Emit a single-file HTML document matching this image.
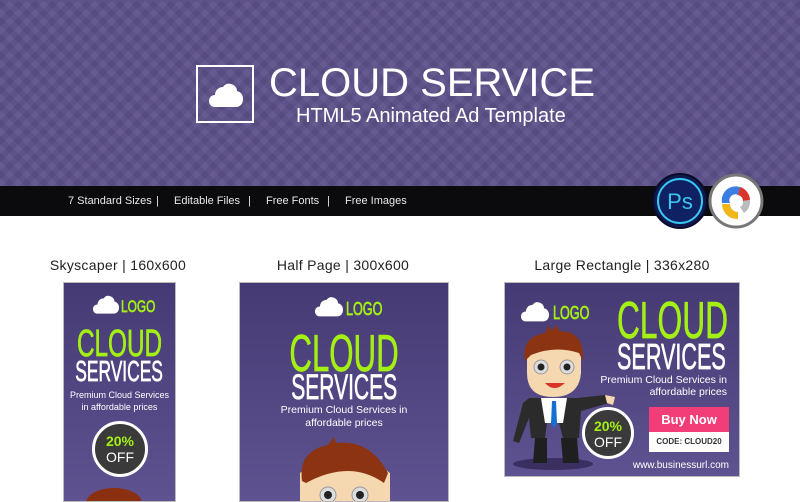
<!DOCTYPE html>
<html><head><meta charset="utf-8"><style>
*{margin:0;padding:0;box-sizing:border-box}
body{width:800px;height:500px;overflow:hidden;background:#fff;font-family:"Liberation Sans",sans-serif;position:relative}
.abs{position:absolute}
.hdr{left:0;top:0;width:800px;height:186px;background:#5c5088;background-image:repeating-linear-gradient(45deg,rgba(255,255,255,.03) 0 6px,rgba(0,0,0,.03) 6px 12px),repeating-linear-gradient(-45deg,rgba(255,255,255,.03) 0 6px,rgba(0,0,0,.03) 6px 12px)}
.bar{left:0;top:186px;width:800px;height:30px;background:#0b0a0c;color:#e8e8e8;font-size:11px;line-height:30px}
.lbl{top:257px;font-size:14px;color:#222;text-align:center;letter-spacing:.3px}
.ad{background:linear-gradient(#463a74,#5e5390);border:1px solid #bbb;overflow:hidden}
.c{position:absolute;left:0;width:100%;display:flex;justify-content:center;white-space:nowrap}
.c2{position:absolute;left:0;width:100%;text-align:center}
.cond{display:inline-block;transform:scaleX(.62);transform-origin:center;white-space:nowrap;-webkit-text-stroke:0.7px currentColor}
.g{color:#a4f013}.w{color:#fff}
.badge{position:absolute;border-radius:50%;background:#3a3a3a;border:3px solid #fff;text-align:center;color:#fff;font-weight:bold}
</style></head><body>
<svg width="0" height="0" style="position:absolute"><defs><symbol id="cl" viewBox="0 0 34 24"><path d="M6 24C2 24 0 21 0 18C0 14 3 12 6 12C6 7 10 4 14 4C16 1 19 0 22 1C26 2 28 5 28 8C32 9 34 12 34 16C34 21 31 24 27 24Z" fill="#fff"/></symbol></defs></svg>

<div class="abs hdr"></div>
<div class="abs" style="left:196px;top:65px;width:58px;height:58px;border:2px solid #fff"></div>
<svg class="abs" style="left:209px;top:83px" width="34" height="24"><use href="#cl"/></svg>
<div class="abs" style="left:269px;top:60px;font-size:40px;line-height:46px;color:#fff;white-space:nowrap">CLOUD SERVICE</div>
<div class="abs" style="left:296px;top:105px;font-size:20px;line-height:23px;color:#fff;white-space:nowrap">HTML5 Animated Ad Template</div>

<div class="abs bar"><span style="position:absolute;left:68px">7 Standard Sizes</span><span style="position:absolute;left:156px">|</span><span style="position:absolute;left:174px">Editable Files</span><span style="position:absolute;left:248px">|</span><span style="position:absolute;left:266px">Free Fonts</span><span style="position:absolute;left:327px">|</span><span style="position:absolute;left:345px">Free Images</span></div>

<svg class="abs" style="left:650px;top:172px" width="116" height="58">
<circle cx="30" cy="29" r="27" fill="#0e1a4e" stroke="#0a0a2a" stroke-width="2"/>
<circle cx="30" cy="29" r="22" fill="#0f2162" stroke="#39c7f0" stroke-width="2"/>
<text x="30" y="37" text-anchor="middle" font-family="Liberation Sans" font-size="22" fill="#39c7f0">Ps</text>
<circle cx="86" cy="29" r="26" fill="#fff" stroke="#777" stroke-width="3"/>
<path d="M72 31A14 14 0 0 1 90 15L88 23A6 6 0 0 0 80 31Z" fill="#3b7de0"/>
<path d="M90 15A14 14 0 0 1 100 28L93 29A6 6 0 0 0 88 23Z" fill="#d8342c"/>
<path d="M100 28A14 14 0 0 1 94 41L90 35A6 6 0 0 0 93 29Z" fill="#bbb"/>
<path d="M72 32L80 32A8 8 0 0 0 88 40L88 47A15 15 0 0 1 72 32Z" fill="#f2b619"/>
</svg>

<div class="abs lbl" style="left:40px;width:156px">Skyscaper | 160x600</div>
<div class="abs lbl" style="left:238px;width:210px">Half Page | 300x600</div>
<div class="abs lbl" style="left:504px;width:236px">Large Rectangle | 336x280</div>

<!-- skyscraper -->
<div class="abs ad" style="left:63px;top:282px;width:113px;height:220px">
<svg class="abs" style="left:29px;top:12px" width="26" height="19"><use href="#cl"/></svg>
<div class="abs g" style="left:57px;top:15px;font-size:17px;line-height:17px"><span class="cond" style="transform-origin:left;transform:scaleX(.7)">LOGO</span></div>
<div class="c g" style="top:42px;font-size:38px;line-height:38px"><span class="cond" style="transform:scaleX(.64)">CLOUD</span></div>
<div class="c w" style="top:75px;font-size:29px;line-height:29px"><span class="cond" style="transform:scaleX(.6)">SERVICES</span></div>
<div class="c2 w" style="top:106px;font-size:9px;line-height:12px">Premium Cloud Services<br>in affordable prices</div>
<div class="badge" style="left:28px;top:138px;width:56px;height:56px;padding-top:9px;font-size:14px;line-height:16px"><span class="g">20%</span><br><span style="font-weight:normal">OFF</span></div>
<div class="abs" style="left:22px;top:205px;width:56px;height:30px;border-radius:50% 50% 0 0;background:#8a3010"></div>
</div>

<!-- half page -->
<div class="abs ad" style="left:239px;top:282px;width:210px;height:220px">
<svg class="abs" style="left:75px;top:13px" width="28" height="21"><use href="#cl"/></svg>
<div class="abs g" style="left:106px;top:17px;font-size:18px;line-height:18px"><span class="cond" style="transform-origin:left;transform:scaleX(.7)">LOGO</span></div>
<div class="c g" style="top:45px;font-size:52px;line-height:52px"><span class="cond" style="transform:scaleX(.6)">CLOUD</span></div>
<div class="c w" style="top:87px;font-size:35px;line-height:35px"><span class="cond" style="transform:scaleX(.6)">SERVICES</span></div>
<div class="c2 w" style="top:121px;font-size:10.5px;line-height:13px">Premium Cloud Services in<br>affordable prices</div>
<svg class="abs" style="left:40px;top:150px" width="130" height="70">
<path d="M20 70L20 40Q65 5 110 40L110 70Z" fill="#f5d7b0"/>
<path d="M22 48Q18 18 48 12L54 4L56 10Q90 6 108 40L104 50Q70 26 26 50Z" fill="#8c3312"/>
<circle cx="48" cy="62" r="8" fill="#ddd" stroke="#999"/><circle cx="48" cy="62" r="4" fill="#222"/>
<circle cx="80" cy="62" r="8" fill="#ddd" stroke="#999"/><circle cx="80" cy="62" r="4" fill="#222"/>
</svg>
</div>

<!-- large rectangle -->
<div class="abs ad" style="left:504px;top:282px;width:236px;height:195px">
<svg class="abs" style="left:16px;top:18px" width="28" height="21"><use href="#cl"/></svg>
<div class="abs g" style="left:48px;top:21px;font-size:18px;line-height:18px"><span class="cond" style="transform-origin:left;transform:scaleX(.7)">LOGO</span></div>
<div class="abs g" style="left:112px;top:12px;font-size:52px;line-height:52px"><span class="cond" style="transform-origin:left;transform:scaleX(.61)">CLOUD</span></div>
<div class="abs w" style="left:112px;top:56px;font-size:36px;line-height:36px"><span class="cond" style="transform-origin:left;transform:scaleX(.6)">SERVICES</span></div>
<div class="abs w" style="right:12px;top:91px;font-size:10.5px;line-height:12px;text-align:right">Premium Cloud Services in<br>affordable prices</div>
<div class="abs" style="left:144px;top:124px;width:80px;height:25px;background:#f13d78;color:#fff;font-size:13px;text-align:center;line-height:25px;font-weight:bold">Buy Now</div>
<div class="abs" style="left:144px;top:149px;width:80px;height:20px;background:#fff;color:#333;font-size:8px;text-align:center;line-height:20px;font-weight:bold">CODE: CLOUD20</div>
<div class="abs w" style="right:10px;top:177px;font-size:10px">www.businessurl.com</div>
<svg class="abs" style="left:0;top:40px" width="140" height="150">
<ellipse cx="48" cy="141" rx="40" ry="6" fill="#3a2f60"/>
<path d="M24 75L72 75L100 72L104 80L76 88L74 115L58 115L54 100L42 100L40 115L26 115L24 95L14 120L8 118L18 80Z" fill="#2b2b2b"/>
<path d="M30 115L42 115L42 140L28 140Z M56 115L72 115L74 140L58 140Z" fill="#1f1f1f"/>
<path d="M36 75L62 75L58 100L40 100Z" fill="#fff"/>
<path d="M47 78L51 78L52 100L49 105L46 100Z" fill="#1670d0"/>
<path d="M100 72L110 74L108 82L102 80Z" fill="#f5d7b0"/>
<path d="M22 35Q22 12 48 12Q76 12 76 35L76 50Q74 74 48 74Q22 74 22 50Z" fill="#f5d7b0"/>
<path d="M20 38Q16 14 40 10L44 2L46 8L52 2L54 8Q80 8 78 38L74 30Q50 22 26 32Z" fill="#8c3312"/>
<circle cx="36" cy="44" r="7" fill="#ddd" stroke="#999"/><circle cx="36" cy="44" r="3.5" fill="#222"/>
<circle cx="62" cy="44" r="7" fill="#ddd" stroke="#999"/><circle cx="62" cy="44" r="3.5" fill="#222"/>
<path d="M40 60Q49 70 60 60Z" fill="#d9342a"/>
</svg>
<div class="badge" style="left:77px;top:124px;width:52px;height:52px;padding-top:8px;font-size:14px;line-height:16px"><span class="g">20%</span><br><span style="font-weight:normal">OFF</span></div>
</div>
</body></html>
